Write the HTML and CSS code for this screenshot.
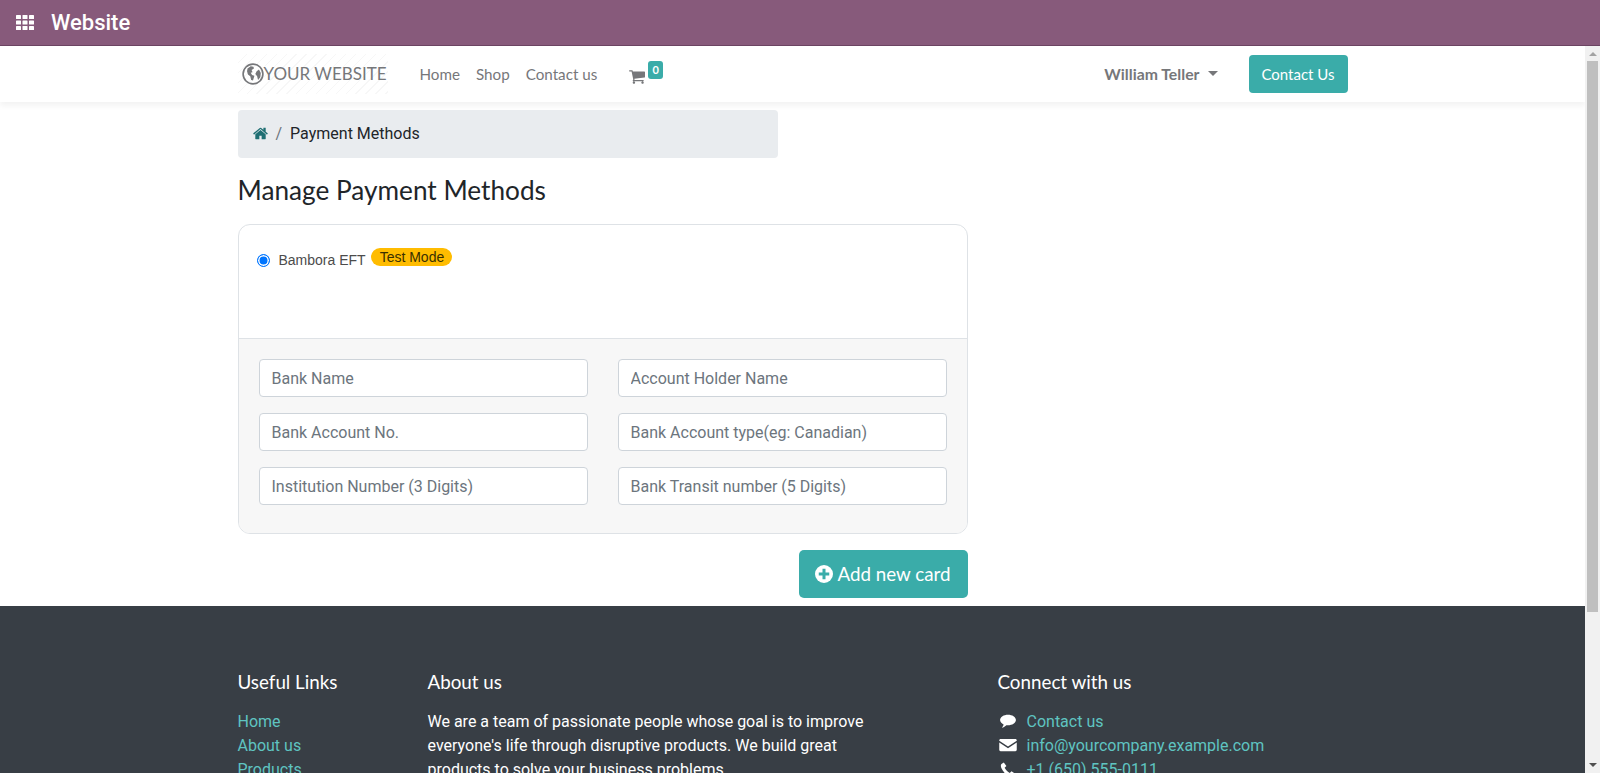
FILE: index.html
```html
<!DOCTYPE html>
<html lang="en">
<head>
  <meta charset="UTF-8">
  <meta name="viewport" content="width=device-width, initial-scale=1">
  <title>Payment Methods</title>
  <link rel="stylesheet" href="styles.css">
</head>
<body>
  <!-- Backend bar -->
  <div class="topbar">
    <svg class="apps-icon" viewBox="0 0 18 15" width="18" height="15" aria-hidden="true">
      <g fill="#fff">
        <rect x="0" y="0" width="5" height="4" rx="0.6"/><rect x="6.5" y="0" width="5" height="4" rx="0.6"/><rect x="13" y="0" width="5" height="4" rx="0.6"/>
        <rect x="0" y="5.5" width="5" height="4" rx="0.6"/><rect x="6.5" y="5.5" width="5" height="4" rx="0.6"/><rect x="13" y="5.5" width="5" height="4" rx="0.6"/>
        <rect x="0" y="11" width="5" height="4" rx="0.6"/><rect x="6.5" y="11" width="5" height="4" rx="0.6"/><rect x="13" y="11" width="5" height="4" rx="0.6"/>
      </g>
    </svg>
    <span class="topbar-title">Website</span>
  </div>

  <div class="viewport">
    <div class="page">
      <!-- Site navigation -->
      <header class="site-header">
        <div class="container header-row">
          <a class="logo" href="#">
            <svg class="logo-globe" viewBox="0 0 24 24" width="22" height="22" aria-hidden="true">
              <circle cx="12" cy="12" r="10.8" fill="none" stroke="#76777a" stroke-width="1.8"/>
              <path fill="#76777a" d="M6 6l3.500-2.500 3 .5.500 2-2.500 1.500 1 2.500-2 .5 1.500 2.500 2.500 1-1.500 5-2-.5-1-4-2.500-2-1-3.500zM16 9l2.500-2 2 4-.5 4.500-2.500 3-1-4-2-2.500z"/>
            </svg>
            <span class="logo-text">YOUR WEBSITE</span>
          </a>
          <nav class="main-nav">
            <a href="#">Home</a>
            <a href="#">Shop</a>
            <a href="#">Contact us</a>
          </nav>
          <a class="cart" href="#">
            <svg viewBox="0 0 1664 1408" width="16" height="14" aria-hidden="true">
              <path fill="#76777a" d="M640 1280q0 53-37.500 90.500T512 1408t-90.500-37.500T384 1280t37.500-90.500T512 1152t90.500 37.500T640 1280zm896 0q0 53-37.500 90.500T1408 1408t-90.500-37.500-37.500-90.500 37.500-90.500 90.500-37.500 90.500 37.500 37.500 90.500zm128-1088v512q0 24-16.500 42.500T1607 768L563 890q13 60 13 70 0 16-24 64h920q26 0 45 19t19 45-19 45-45 19H448q-26 0-45-19t-19-45q0-11 8-31.500t16-36 21.500-40T445 952L268 128H64q-26 0-45-19T0 64t19-45T64 0h256q16 0 28.500 6.500T368 22t13 24.500 8 26 5.500 29.500 4.500 26h1201q26 0 45 19t19 45z"/>
            </svg>
            <span class="cart-badge">0</span>
          </a>
          <a class="user-menu" href="#">William Teller<span class="caret"></span></a>
          <a class="btn btn-contact" href="#">Contact Us</a>
        </div>
      </header>

      <!-- Main content -->
      <main class="container main-content">
        <div class="breadcrumb">
          <svg class="home-icon" viewBox="0 0 1664 1408" width="15" height="13" aria-hidden="true">
            <path fill="#1f6f73" d="M1408 800v480q0 26-19 45t-45 19H960V960H704v384H320q-26 0-45-19t-19-45V800q0-1 .5-3t.5-3l575-474 575 474q1 2 1 6zm223-69l-62 74q-8 9-21 11h-3q-13 0-21-7L832 200 140 809q-12 8-24 7-13-2-21-11l-62-74q-8-10-7-23.500T37 686L756 87q32-26 76-26t76 26l244 204V96q0-14 9-23t23-9h192q14 0 23 9t9 23v408l219 182q10 8 11 21.500t-7 23.500z"/>
          </svg>
          <span class="breadcrumb-sep">/</span>
          <span>Payment Methods</span>
        </div>

        <h3 class="page-title">Manage Payment Methods</h3>

        <div class="payment-col">
          <div class="payment-card">
            <div class="payment-option">
              <span class="radio"></span>
              <span class="payment-name">Bambora EFT</span>
              <span class="test-badge">Test Mode</span>
            </div>
            <div class="payment-form">
              <input class="field" placeholder="Bank Name">
              <input class="field" placeholder="Account Holder Name">
              <input class="field" placeholder="Bank Account No.">
              <input class="field" placeholder="Bank Account type(eg: Canadian)">
              <input class="field" placeholder="Institution Number (3 Digits)">
              <input class="field" placeholder="Bank Transit number (5 Digits)">
            </div>
          </div>
          <div class="payment-actions">
            <a class="btn btn-add" href="#">
              <svg viewBox="0 0 24 24" width="18" height="18" aria-hidden="true">
                <circle cx="12" cy="12" r="12" fill="#fff"/>
                <path fill="#3aaca9" d="M10 5h4v5h5v4h-5v5h-4v-5H5v-4h5z"/>
              </svg>
              Add new card
            </a>
          </div>
        </div>
      </main>

      <!-- Footer -->
      <footer class="site-footer">
        <div class="container footer-row">
          <div class="footer-links">
            <h5>Useful Links</h5>
            <a href="#">Home</a>
            <a href="#">About us</a>
            <a href="#">Products</a>
          </div>
          <div class="footer-about">
            <h5>About us</h5>
            <p>We are a team of passionate people whose goal is to improve everyone's life through disruptive products. We build great products to solve your business problems.</p>
          </div>
          <div class="footer-connect">
            <h5>Connect with us</h5>
            <a href="#">
              <svg viewBox="0 0 20 18" width="17" height="15" aria-hidden="true"><path fill="#fff" d="M10 1c5 0 9.500 2.600 9.500 6.300S15 13.600 10 13.600c-.7 0-1.300 0-2-.1-1.300 1.400-3.200 2.600-5.500 3 .9-1 2-2.400 2.200-4C2.200 11.500.5 9.600.5 7.300.5 3.600 5 1 10 1z"/></svg>
              Contact us
            </a>
            <a href="#">
              <svg viewBox="0 0 20 16" width="17" height="14" aria-hidden="true"><path fill="#fff" d="M1.500 1h17c.8 0 1.500.7 1.500 1.500v.6l-10 6.600L0 3.100v-.6C0 1.700.7 1 1.500 1zM0 5.100l10 6.500 10-6.500v8.400c0 .8-.7 1.500-1.500 1.500h-17C.7 15 0 14.300 0 13.500z"/></svg>
              info@yourcompany.example.com
            </a>
            <a href="#">
              <svg viewBox="0 0 16 16" width="15" height="15" aria-hidden="true"><path fill="#fff" d="M3.500.5L1 2.200C.2 3 .2 4.800.9 6.500c1.600 3.700 4.900 7.300 8.600 8.800 1.700.6 3.400.5 4.200-.3l1.800-2.500-3.700-2.700-1.900 1.800C7.700 10.700 5.500 8.400 4.400 6.200l1.900-2z"/></svg>
              +1 (650) 555-0111
            </a>
          </div>
        </div>
      </footer>
    </div>

    <!-- Page scrollbar -->
    <div class="scrollbar">
      <span class="scroll-up"></span>
      <span class="scroll-thumb"></span>
      <span class="scroll-down"></span>
    </div>
  </div>
</body>
</html>
```

FILE: styles.css
```css
/* Global Styles */
* {
  box-sizing: border-box;
}
html, body {
  height: 100%;
}
body {
  font-family: Roboto, Arial, sans-serif;
  font-size: 16px;
  color: #212529;
  background: #fff;
  margin: 0;
  display: flex;
  flex-direction: column;
  overflow: hidden;
}
a {
  text-decoration: none;
}
.container {
  width: 1110px;
  margin: 0 auto;
}

/* Backend bar */
.topbar {
  height: 46px;
  flex: none;
  background: #875a7b;
  border-bottom: 1px solid #6b4462;
  display: flex;
  align-items: center;
  padding-left: 16px;
  color: #fff;
}
.apps-icon {
  margin-right: 17px;
}
.topbar-title {
  font-size: 22px;
  font-weight: 500;
}

/* Layout below the bar */
.viewport {
  flex: 1;
  min-height: 0;
  display: flex;
}
.page {
  flex: 1;
  min-width: 0;
  overflow: hidden;
}
.scrollbar {
  width: 15px;
  flex: none;
  background: #f1f1f1;
  display: flex;
  flex-direction: column;
  align-items: center;
}
.scroll-up {
  width: 0;
  height: 0;
  margin: 6px 0 5px;
  border-left: 4px solid transparent;
  border-right: 4px solid transparent;
  border-bottom: 4px solid #a3a3a3;
}
.scroll-thumb {
  width: 11px;
  height: 551px;
  background: #bfbfbf;
}
.scroll-down {
  width: 0;
  height: 0;
  margin-top: auto;
  margin-bottom: 6px;
  border-left: 4px solid transparent;
  border-right: 4px solid transparent;
  border-top: 4px solid #505050;
}

/* Site navigation */
.site-header {
  height: 56px;
  background: #fff;
  box-shadow: 0 4px 6px rgba(0, 0, 0, 0.05);
}
.header-row {
  height: 100%;
  display: flex;
  align-items: center;
  font-family: Lato, Arial, sans-serif;
}
.logo {
  width: 150px;
  height: 40px;
  margin-bottom: 1px;
  flex: none;
  display: flex;
  align-items: center;
  padding-left: 4px;
  background: repeating-linear-gradient(135deg, #fff 0, #fff 6px, #f7f7f7 6px, #f7f7f7 7px);
}
.logo-globe {
  flex: none;
}
.logo-text {
  font-family: Lato, Arial, sans-serif;
  font-size: 17px;
  color: #76777a;
  white-space: nowrap;
}
.main-nav {
  display: flex;
  gap: 16px;
  margin-left: 32px;
  margin-bottom: 1px;
  font-size: 15.2px;
}
.main-nav a {
  color: #76777a;
}
.cart {
  display: flex;
  align-items: flex-start;
  margin-left: 32px;
}
.cart svg {
  margin-top: 5px;
}
.cart-badge {
  background: #3aaca9;
  color: #fff;
  font-size: 11px;
  font-weight: 700;
  width: 15px;
  height: 18px;
  line-height: 17px;
  text-align: center;
  border-radius: 3px;
  margin-left: 3px;
  margin-top: -4px;
}
.user-menu {
  margin-left: auto;
  margin-bottom: 1px;
  color: #76777a;
  font-size: 15.8px;
  font-weight: 700;
  display: flex;
  align-items: center;
}
.caret {
  margin-left: 8px;
  width: 0;
  height: 0;
  border-left: 5px solid transparent;
  border-right: 5px solid transparent;
  border-top: 5px solid #76777a;
}
.btn {
  background: #3aaca9;
  color: #fff;
  display: flex;
  align-items: center;
  justify-content: center;
}
.btn-contact {
  width: 99px;
  height: 38px;
  margin-left: 31px;
  border-radius: 4px;
  font-size: 15px;
}

/* Main content */
.breadcrumb {
  width: 540px;
  height: 48px;
  margin-top: 8px;
  padding-bottom: 1px;
  background: #e9ecef;
  border-radius: 4px;
  display: flex;
  align-items: center;
  padding-left: 15px;
  font-size: 16px;
}
.breadcrumb-sep {
  color: #6c757d;
  margin: 0 8px;
}
.page-title {
  font-family: Lato, Arial, sans-serif;
  font-weight: 400;
  font-size: 26.2px;
  line-height: 29px;
  margin: 18px 0 0;
}
.payment-col {
  width: 730px;
  margin-top: 19px;
}
.payment-card {
  height: 310px;
  border: 1px solid #dee2e6;
  border-radius: 12px;
  overflow: hidden;
}
.payment-option {
  height: 114px;
  display: flex;
  align-items: flex-start;
  padding: 23px 0 0 18px;
  border-bottom: 1px solid #dee2e6;
}
.radio {
  width: 13px;
  height: 13px;
  margin-top: 6px;
  border-radius: 50%;
  border: 1px solid #0075ff;
  background: #0075ff;
  box-shadow: inset 0 0 0 1.500px #fff;
}
.payment-name {
  font-family: "Liberation Sans", Arial, sans-serif;
  font-size: 14px;
  line-height: 24px;
  color: #4c4c4c;
  margin-left: 9px;
}
.test-badge {
  font-family: "Liberation Sans", Arial, sans-serif;
  background: #ffbc00;
  color: #3a3000;
  font-size: 14px;
  line-height: 18px;
  padding: 0 8px 0 9px;
  border-radius: 9px;
  margin-left: 5px;
}
.payment-form {
  height: 195px;
  background: #f7f7f7;
  display: grid;
  grid-template-columns: 329px 329px;
  grid-auto-rows: 38px;
  column-gap: 30px;
  row-gap: 16px;
  padding: 20px;
}
.field {
  font-family: Roboto, Arial, sans-serif;
  font-size: 16px;
  width: 100%;
  padding: 0 12px;
  border: 1px solid #ced4da;
  border-radius: 4px;
  background: #fff;
}
.field::placeholder {
  color: #6c757d;
  opacity: 1;
}
.payment-actions {
  display: flex;
  justify-content: flex-end;
  margin-top: 16px;
}
.btn-add {
  width: 169px;
  height: 48px;
  gap: 4px;
  padding-bottom: 1px;
  border-radius: 5px;
  font-family: Lato, Arial, sans-serif;
  font-size: 18.8px;
}

/* Footer */
.site-footer {
  margin-top: 8px;
  height: 300px;
  background: #383e45;
  color: #fff;
  padding-top: 64px;
}
.footer-row {
  display: grid;
  grid-template-columns: 190px 570px 1fr;
}
.site-footer h5 {
  font-family: Lato, Arial, sans-serif;
  font-weight: 400;
  font-size: 18.8px;
  line-height: 23px;
  margin: 0 0 16px;
}
.site-footer .footer-about h5 {
  margin-bottom: 17px;
}
.footer-links a,
.footer-connect a {
  display: flex;
  align-items: center;
  height: 24px;
  color: #5fc4c1;
}
.footer-connect svg {
  width: 20px;
  margin-right: 9px;
}
.footer-about p {
  width: 445px;
  margin: 0;
  line-height: 24px;
}
```
